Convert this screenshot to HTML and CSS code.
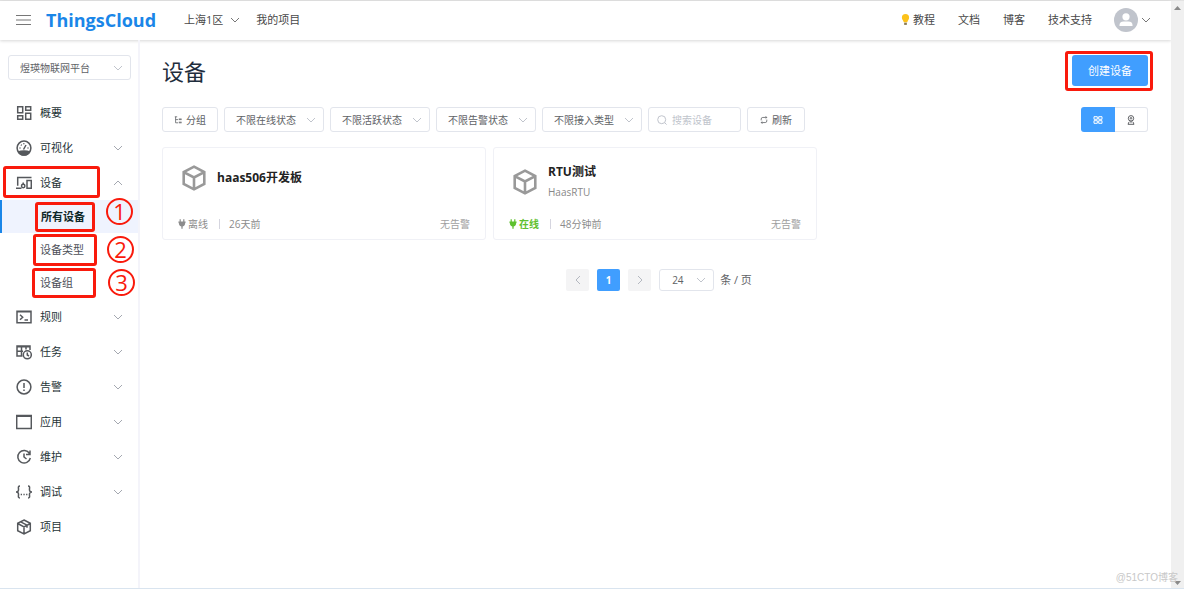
FILE: index.html
```html
<!DOCTYPE html>
<html lang="zh-CN">
<head>
<meta charset="utf-8">
<title>ThingsCloud</title>
<link rel="stylesheet" href="styles.css">
</head>
<body>
<svg class="defs" aria-hidden="true">
  <symbol id="down" viewBox="0 0 10 10"><path d="M1 3l4 4 4-4"/></symbol>
  <symbol id="cube" viewBox="0 0 24 24"><path d="M12 1.500l9.500 5v11L12 22.500l-9.500-5v-11zM2.500 6.500L12 11.500l9.500-5M12 11.500v11"/></symbol>
  <symbol id="plug" viewBox="0 0 10 12"><path d="M2 0h1.500v3h3V0H8v3h1.500v1.500H9C9 7 8 8.500 5.800 9v3H4.200V9C2 8.500 1 7 1 4.500H.5V3H2z"/></symbol>
</svg>
<div class="app">
  <div class="page">
    <header class="topbar">
      <button class="burger" aria-label="菜单"><svg viewBox="0 0 15 12"><path d="M0 1.500h15M0 6h15M0 10.500h15"/></svg></button>
      <a class="brand" href="#">ThingsCloud</a>
      <button class="region">上海1区<svg class="chev"><use href="#down"/></svg></button>
      <a class="link" href="#">我的项目</a>
      <nav class="toplinks">
        <a class="link tutorial" href="#"><svg class="bulb" viewBox="0 0 10 12"><path class="glass" d="M5 0a4 4 0 0 0-4 4c0 2 1.700 2.800 2 5h4c.3-2.200 2-3 2-5a4 4 0 0 0-4-4z"/><path class="base" d="M3.500 9.500h3V12h-3z"/></svg>教程</a>
        <a class="link" href="#">文档</a>
        <a class="link" href="#">博客</a>
        <a class="link" href="#">技术支持</a>
      </nav>
      <button class="account" aria-label="账户">
        <svg class="avatar" viewBox="0 0 24 24"><circle class="disc" cx="12" cy="12" r="12"/><circle cx="12" cy="8.800" r="3.600"/><path d="M5.500 18v-1c0-2.500 1.800-3.500 4-3.500h5c2.200 0 4 1 4 3.500v1z"/></svg>
        <svg class="chev"><use href="#down"/></svg>
      </button>
    </header>
    <div class="body">
      <aside class="sidebar">
        <div class="select project">
          <select aria-label="项目"><option>煜瑛物联网平台</option></select>
          <svg class="chev"><use href="#down"/></svg>
        </div>
        <nav class="menu">
          <a class="item" href="#"><svg class="icon" viewBox="0 0 16 16"><path d="M1.700 1.700h5v6h-5zM9.700 1.700h5v3.500h-5zM1.700 10.800h5v3.500h-5zM9.700 8.300h5v6h-5z"/></svg><span>概要</span></a>
          <a class="item" href="#"><svg class="icon" viewBox="0 0 16 16"><circle cx="8" cy="8" r="6.900"/><path class="solid" d="M2.500 12C5 10.600 11 10.600 13.500 12 12 14.500 10 15 8 15s-4-.5-5.500-3z"/><path d="M7.500 9.500L10 5M3.500 8h1M11.500 8h1M5 4.700l.7.7M7.800 3.300v1"/></svg><span>可视化</span><svg class="chev"><use href="#down"/></svg></a>
          <a class="item" href="#"><svg class="icon" viewBox="0 0 16 16"><path d="M15.500 2.500H1.700v8.300M0 13.300h5.500M11 5.500h4.300v7.800H11z"/><circle cx="7.200" cy="11" r="1.700"/><path d="M7.200 7.500v1.500"/></svg><span>设备</span><svg class="chev up"><use href="#down"/></svg><i class="mark m-root"></i></a>
          <div class="submenu">
            <a class="sub active" href="#">所有设备<i class="mark m-all"></i><b class="num n1">1</b></a>
            <a class="sub" href="#">设备类型<i class="mark m-type"></i><b class="num n2">2</b></a>
            <a class="sub" href="#">设备组<i class="mark m-group"></i><b class="num n3">3</b></a>
          </div>
          <a class="item" href="#"><svg class="icon" viewBox="0 0 16 16"><path d="M1 2.200h14v11.600H1z"/><path d="M1 2.800h14M4 5.800l2.700 2.500L4 10.800M8.500 11h3.500"/></svg><span>规则</span><svg class="chev"><use href="#down"/></svg></a>
          <a class="item" href="#"><svg class="icon" viewBox="0 0 16 16"><path d="M6.500 12H1V2h13v4M1 2.700h13M1 7.300h6M5.500 2v10M10 2v3.500"/><circle cx="11.300" cy="10.800" r="4"/><path d="M11.300 8.500V11l1.700 1"/></svg><span>任务</span><svg class="chev"><use href="#down"/></svg></a>
          <a class="item" href="#"><svg class="icon" viewBox="0 0 16 16"><circle cx="8" cy="8" r="6.900"/><path d="M8 4v5M8 10.500V12"/></svg><span>告警</span><svg class="chev"><use href="#down"/></svg></a>
          <a class="item" href="#"><svg class="icon" viewBox="0 0 16 16"><path d="M.7 1.500h14.600v13H.7zM.7 2.300h14.600"/></svg><span>应用</span><svg class="chev"><use href="#down"/></svg></a>
          <a class="item" href="#"><svg class="icon" viewBox="0 0 16 16"><path d="M13.500 4.500A6.300 6.300 0 1 0 14.300 9M14 1.500v4h-4M8 4.500V8l2.500 2"/></svg><span>维护</span><svg class="chev"><use href="#down"/></svg></a>
          <a class="item" href="#"><svg class="icon" viewBox="0 0 16 16"><path d="M4 2C1.500 2 2.700 4 2.500 6 2.400 7.300 1.500 8 0 8c1.500 0 2.400.7 2.500 2 .2 2-1 4 1.500 4M12 2c2.500 0 1.300 2 1.500 4 .1 1.300 1 2 2.500 2-1.500 0-2.400.7-2.500 2-.2 2 1 4-1.500 4M4.700 10.500h1.300M7.400 10.500h1.300M10.100 10.500h1.300"/></svg><span>调试</span><svg class="chev"><use href="#down"/></svg></a>
          <a class="item" href="#"><svg class="icon" viewBox="0 0 16 16"><path d="M8 1l6.300 3.300v7.400L8 15l-6.300-3.300V4.300zM1.700 4.500L8 7.800l6.300-3.300M8 7.800V15M4.700 2.800L11 6.200v2.500"/></svg><span>项目</span></a>
        </nav>
      </aside>
      <main class="content">
        <div class="heading">
          <h1>设备</h1>
          <div class="create"><button class="primary">创建设备</button><i class="mark m-create"></i></div>
        </div>
        <div class="toolbar">
          <button class="btn"><svg viewBox="0 0 10 10"><path d="M1 1h3M2 1v7.500h3M2 4.500h3M6 4.500h3.500M6 8.500h3.500M6 3.700h3.500M6 7.700h3.500"/></svg>分组</button>
          <div class="select"><select aria-label="在线状态"><option>不限在线状态</option></select><svg class="chev"><use href="#down"/></svg></div>
          <div class="select"><select aria-label="活跃状态"><option>不限活跃状态</option></select><svg class="chev"><use href="#down"/></svg></div>
          <div class="select"><select aria-label="告警状态"><option>不限告警状态</option></select><svg class="chev"><use href="#down"/></svg></div>
          <div class="select"><select aria-label="接入类型"><option>不限接入类型</option></select><svg class="chev"><use href="#down"/></svg></div>
          <label class="search"><svg viewBox="0 0 10 10"><circle cx="4.700" cy="4.700" r="4"/><path d="M7.600 7.600l2 2"/></svg><input type="text" placeholder="搜索设备" aria-label="搜索设备"></label>
          <button class="btn refresh"><svg viewBox="0 0 10 10"><path d="M1.500 5.500V3.800A2 2 0 0 1 3.500 1.800h5M7 .3L8.500 1.800 7 3.300M8.500 4.500v1.700a2 2 0 0 1-2 2h-5M3 6.700L1.500 8.200 3 9.700"/></svg>刷新</button>
          <div class="toggle">
            <button class="on" aria-label="卡片视图"><svg viewBox="0 0 10 10"><path d="M1 1.700h3.300v2.600H1zM5.700 1.700H9v2.600H5.700zM1 5.700h3.300v2.600H1zM5.700 5.700H9v2.600H5.700z"/></svg></button>
            <button aria-label="地图视图"><svg viewBox="0 0 10 10"><circle cx="5" cy="3.300" r="2.700"/><circle cx="5" cy="3.300" r=".8"/><path d="M3.300 5.500L5 7.500l1.700-2M3 7L2 9.300h6L7 7"/></svg></button>
          </div>
        </div>
        <div class="cards">
          <article class="card">
            <div class="info"><svg class="cube"><use href="#cube"/></svg><div><h2>haas506开发板</h2></div></div>
            <div class="meta"><svg class="plug"><use href="#plug"/></svg><span>离线</span><span class="bar"></span><span>26天前</span><span class="alarm">无告警</span></div>
          </article>
          <article class="card">
            <div class="info"><svg class="cube"><use href="#cube"/></svg><div><h2>RTU测试</h2><p>HaasRTU</p></div></div>
            <div class="meta"><svg class="plug online"><use href="#plug"/></svg><span class="online">在线</span><span class="bar"></span><span>48分钟前</span><span class="alarm">无告警</span></div>
          </article>
        </div>
        <div class="pager">
          <button aria-label="上一页"><svg class="chev prev"><use href="#down"/></svg></button>
          <button class="current">1</button>
          <button aria-label="下一页"><svg class="chev next"><use href="#down"/></svg></button>
          <div class="select"><select aria-label="每页条数"><option>24</option></select><svg class="chev"><use href="#down"/></svg></div>
          <span class="unit">条 / 页</span>
        </div>
      </main>
    </div>
  </div>
  <div class="scrollbar"><svg viewBox="0 0 7 4"><path d="M0 4l3.500-4L7 4z"/></svg><svg viewBox="0 0 7 4"><path d="M0 0h7L3.500 4z"/></svg></div>
  <div class="watermark">@51CTO博客</div>
</div>
</body>
</html>
```
FILE: styles.css
```css
* { box-sizing: border-box; }
body {
  margin: 0;
  background: #fff;
  color: #606266;
  font: 11px/16px "Open Sans", "Noto Sans CJK SC", sans-serif;
}
a { color: inherit; text-decoration: none; }
button, select, input { font: inherit; color: inherit; }
button { border: 0; background: none; padding: 0; cursor: pointer; }
svg { fill: none; stroke: currentColor; flex: none; }
h1, h2, p { margin: 0; }
.defs { position: absolute; width: 0; height: 0; }

.app {
  position: relative;
  display: flex;
  min-height: 100vh;
  border-top: 1px solid #e3e3e3;
  border-bottom: 1px solid #d9e4ef;
}
.page { flex: 1; display: flex; flex-direction: column; }
.scrollbar {
  width: 13px;
  display: flex;
  flex-direction: column;
  justify-content: space-between;
  align-items: center;
  padding: 5px 0 3px;
  background: #f0f0f0;
  color: #8a8a8a;
}
.scrollbar svg { width: 7px; height: 4px; fill: currentColor; stroke: none; }
.chev { width: 10px; height: 10px; }

.topbar {
  display: flex;
  align-items: center;
  height: 39px;
  padding: 0 20px 2px 16px;
  box-shadow: 0 1px 3px rgba(0, 0, 0, .16);
  color: #484848;
}
.topbar .chev { color: #777; }
.burger { display: flex; color: #777; }
.burger svg { width: 15px; height: 12px; }
.brand {
  margin-left: 15px;
  font-size: 18px;
  line-height: 24px;
  font-weight: 700;
  color: #1a86e8;
}
.region { display: flex; align-items: center; gap: 7px; margin: 0 16px 0 28px; }
.toplinks { display: flex; gap: 23px; margin-left: auto; }
.tutorial { display: flex; align-items: center; gap: 3px; }
.bulb { width: 9px; height: 11px; stroke: none; }
.glass { fill: #fcc21b; }
.base { fill: #8a7a52; }
.account { display: flex; align-items: center; gap: 3px; margin-left: 22px; }
.avatar { width: 24px; height: 24px; fill: #fff; stroke: none; }
.disc { fill: #c0c4cc; }

.body { flex: 1; display: flex; }
.sidebar { width: 140px; border-right: 2px solid #f4f4fa; padding-top: 15px; }
.select { position: relative; display: flex; align-items: center; }
.select select {
  appearance: none;
  width: 100%;
  height: 25px;
  padding: 0 26px 0 12px;
  border: 1px solid #e2e5ec;
  border-radius: 3px;
  background: #fff;
  font-size: 10px;
}
.select .chev { position: absolute; right: 8px; color: #c0c4cc; pointer-events: none; }
.project { margin: 0 7px 0 8px; }
.project select { padding-right: 20px; padding-left: 11px; }
.menu { padding-top: 15px; }
.item {
  position: relative;
  display: flex;
  align-items: center;
  height: 35px;
  padding: 0 15px 0 16px;
  color: #263437;
}
.icon { width: 16px; height: 16px; margin-right: 8px; color: #55585c; stroke-width: 1.5; }
.solid { fill: currentColor; }
.item .chev { margin-left: auto; color: #a4a8b0; }
.up { transform: rotate(180deg); }
.sub {
  position: relative;
  display: flex;
  align-items: center;
  height: 33px;
  padding-left: 40px;
  color: #4c4f58;
}
.active {
  padding-left: 39px;
  border-left: 2px solid #1a86e8;
  background: #eff3fe;
  color: #10282a;
  font-weight: 700;
}

.mark { position: absolute; border: 3px solid #f91a0c; border-radius: 3px; }
.m-root { left: 3px; top: 1px; width: 97px; height: 32px; }
.m-all { left: 33px; top: 2px; width: 60px; height: 30px; }
.m-type { left: 33px; top: 1px; width: 64px; height: 32px; }
.m-group { left: 32px; top: 2px; width: 64px; height: 30px; }
.m-create { inset: -4px -5px -5px -7px; }
.num {
  position: absolute;
  width: 27px;
  height: 27px;
  border: 2px solid #f91a0c;
  border-radius: 50%;
  color: #f91a0c;
  font-size: 22px;
  line-height: 22px;
  font-weight: 400;
  text-align: center;
}
.n1 { left: 104px; top: -2px; }
.n2 { left: 107px; top: 3px; }
.n3 { left: 108px; top: 3px; }

.content { flex: 1; padding: 15px 23px 15px 22px; }
.heading { display: flex; justify-content: space-between; align-items: center; }
h1 { font-size: 22px; line-height: 30px; font-weight: 400; color: #1f2d3d; }
.create { position: relative; }
.primary {
  display: block;
  width: 76px;
  height: 31px;
  border-radius: 3px;
  background: #409eff;
  color: #fff;
}
.toolbar { display: flex; gap: 6px; margin-top: 21px; }
.toolbar .select { width: 100px; }
.toolbar .select select { padding-left: 11px; }
.btn {
  display: flex;
  align-items: center;
  gap: 4px;
  height: 25px;
  padding: 0 11px;
  border: 1px solid #e2e5ec;
  border-radius: 3px;
  font-size: 10px;
}
.btn svg { width: 8px; height: 8px; }
.refresh { padding: 0 12px; }
.search {
  display: flex;
  align-items: center;
  gap: 5px;
  width: 93px;
  height: 25px;
  padding: 0 8px;
  border: 1px solid #e2e5ec;
  border-radius: 3px;
  color: #c0c4cc;
}
.search svg { width: 10px; height: 10px; }
.search input { flex: 1; min-width: 0; padding: 0; border: 0; outline: 0; font-size: 10px; background: none; }
.search input::placeholder { color: #c0c4cc; }
.toggle { display: flex; margin-left: auto; }
.toggle button {
  display: flex;
  align-items: center;
  justify-content: center;
  width: 33px;
  height: 25px;
  border: 1px solid #e2e5ec;
  border-left: 0;
  border-radius: 0 3px 3px 0;
}
.toggle .on { width: 34px; border: 0; border-radius: 3px 0 0 3px; background: #409eff; color: #fff; }
.toggle svg { width: 10px; height: 10px; }

.cards { display: grid; grid-template-columns: repeat(3, 1fr); gap: 7px; margin-top: 15px; }
.card {
  display: flex;
  flex-direction: column;
  justify-content: space-between;
  min-height: 93px;
  padding: 14px 15px 7px;
  border: 1px solid #f0f1f6;
  border-radius: 3px;
}
.info { display: flex; align-items: center; gap: 10px; min-height: 32px; padding-left: 3px; }
.cube { width: 26px; height: 26px; color: #999; stroke-width: 2.4; }
h2 { font-size: 12px; line-height: 20px; font-weight: 700; color: #222; }
.info p { font-size: 10px; line-height: 20px; color: #888; }
.meta { display: flex; align-items: center; font-size: 10px; color: #8c8c8c; }
.plug { width: 8px; height: 10px; margin-right: 2px; fill: currentColor; stroke: none; }
.online { color: #5fc12f; font-weight: 700; }
.bar { width: 1px; height: 10px; margin: 0 9px 0 11px; background: #d5d5df; }
.alarm { margin-left: auto; color: #a0a0a0; }

.pager { display: flex; align-items: center; justify-content: center; gap: 8px; margin-top: 29px; padding-left: 8px; }
.pager button {
  display: flex;
  align-items: center;
  justify-content: center;
  width: 23px;
  height: 22px;
  border-radius: 2px;
  background: #f4f4f5;
  color: #b4b8c0;
  font-size: 10px;
  font-weight: 700;
}
.pager .current { background: #409eff; color: #fff; }
.prev { transform: rotate(90deg); }
.next { transform: rotate(-90deg); }
.pager .select { width: 55px; }
.pager select { height: 22px; }
.unit { margin-left: -2px; font-size: 11px; }

.watermark {
  position: absolute;
  right: 6px;
  bottom: 2px;
  color: #c8c8c8;
  font: 10px/16px "Liberation Sans", "Noto Sans CJK SC", sans-serif;
}
```
